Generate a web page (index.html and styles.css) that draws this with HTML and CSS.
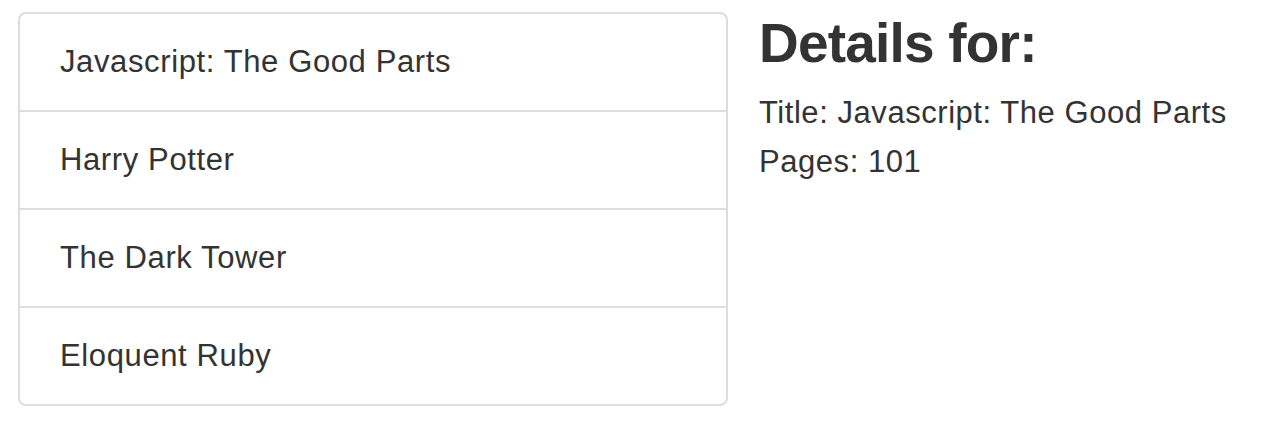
FILE: index.html
```html
<!DOCTYPE html>
<html>
<head>
<meta charset="utf-8">
<link rel="stylesheet" href="styles.css">
</head>
<body>
<div class="page">
  <ul class="book-list">
    <li class="book-item">Javascript: The Good Parts</li>
    <li class="book-item">Harry Potter</li>
    <li class="book-item">The Dark Tower</li>
    <li class="book-item">Eloquent Ruby</li>
  </ul>
  <div class="details">
    <h1 class="details-title">Details for:</h1>
    <p class="details-line">Title: Javascript: The Good Parts</p>
    <p class="details-line">Pages: 101</p>
  </div>
</div>
</body>
</html>
```
FILE: styles.css
```css
html, body {
  margin: 0;
  padding: 0;
  background: #fff;
}
body {
  font-family: "Liberation Sans", Arial, sans-serif;
  color: #333;
}
.page {
  display: flex;
  align-items: flex-start;
  gap: 31px;
  padding: 12px 0 0 18px;
}
.book-list {
  list-style: none;
  margin: 0;
  padding: 0;
  width: 706px;
  border: 2px solid #ddd;
  border-radius: 8px;
}
.book-item {
  font-size: 31px;
  letter-spacing: 0.62px;
  line-height: 44px;
  padding: 26px 40px;
  border-top: 2px solid #ddd;
}
.book-item:first-child {
  border-top: none;
}
.details {
  display: flex;
  flex-direction: column;
}
.details-title {
  margin: 0;
  font-size: 55px;
  letter-spacing: -0.8px;
  line-height: 62px;
  font-weight: bold;
  color: #333;
}
.details-line {
  margin: 0;
  font-size: 31px;
  letter-spacing: 0.55px;
  line-height: 49px;
}
.details-title + .details-line {
  margin-top: 14px;
}
```
